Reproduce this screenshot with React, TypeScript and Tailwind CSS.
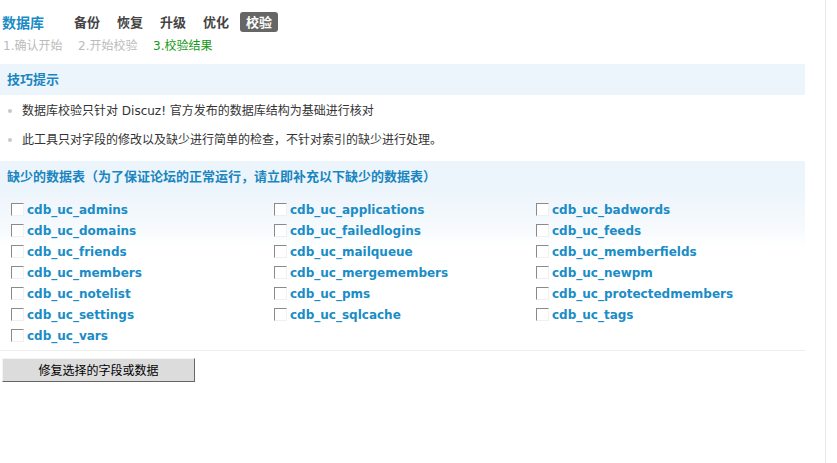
import React from 'react';

const tabs = ['备份', '恢复', '升级', '优化', '校验'];

const tables = [
  'cdb_uc_admins',
  'cdb_uc_applications',
  'cdb_uc_badwords',
  'cdb_uc_domains',
  'cdb_uc_failedlogins',
  'cdb_uc_feeds',
  'cdb_uc_friends',
  'cdb_uc_mailqueue',
  'cdb_uc_memberfields',
  'cdb_uc_members',
  'cdb_uc_mergemembers',
  'cdb_uc_newpm',
  'cdb_uc_notelist',
  'cdb_uc_pms',
  'cdb_uc_protectedmembers',
  'cdb_uc_settings',
  'cdb_uc_sqlcache',
  'cdb_uc_tags',
  'cdb_uc_vars',
];

const cjk = 'font-["DejaVu_Sans","Noto_Sans_CJK_SC",sans-serif]';

function Checkbox() {
  return (
    <span className="block w-[13px] h-[13px] shrink-0 bg-white border-t border-l border-t-[#8a8a8a] border-l-[#8a8a8a] border-b border-r border-b-[#f0f0f0] border-r-[#f0f0f0]" />
  );
}

export default function App() {
  return (
    <div className={`flex min-h-[463px] bg-white ${cjk}`}>
      <div className="w-[825px]">
        <div className="w-[805px]">
          {/* top nav */}
          <div className="flex items-center h-[22px] mt-[11px]">
            <h1 className="ml-[2px] w-[66px] text-[14px] font-bold text-[#1a8cc6] leading-none font-['Noto_Sans_CJK_SC',sans-serif]">
              数据库
            </h1>
            <div className="flex gap-[5px]">
              {tabs.map((t) => (
                <span
                  key={t}
                  className={
                    t === '校验'
                      ? 'px-[6px] h-[20px] flex items-center rounded-[3px] bg-[#666] text-white text-[13px] font-bold font-["Noto_Sans_CJK_SC",sans-serif]'
                      : 'px-[6px] h-[20px] flex items-center text-[#444] text-[13px] font-bold font-["Noto_Sans_CJK_SC",sans-serif]'
                  }
                >
                  {t}
                </span>
              ))}
            </div>
          </div>

          {/* steps */}
          <div className="flex items-center h-[16px] mt-[5px] text-[12px] leading-none">
            <span className="ml-[3px] w-[75px] text-[#bbb]">1.确认开始</span>
            <span className="w-[75px] text-[#bbb]">2.开始校验</span>
            <span className="text-[#139a13]">3.校验结果</span>
          </div>

          {/* tips */}
          <div className="mt-[10px] h-[31px] flex items-center pl-[7px] bg-[#edf5fc] text-[13px] font-bold text-[#1a86c0]">
            技巧提示
          </div>
          <ul className="text-[12px] text-[#333]">
            <li className="flex items-center h-[29px] mt-[1px]">
              <span className="ml-[8px] mr-[10px] w-[4px] h-[4px] rounded-full bg-[#c8c8c8]" />
              数据库校验只针对 Discuz! 官方发布的数据库结构为基础进行核对
            </li>
            <li className="flex items-center h-[29px]">
              <span className="ml-[8px] mr-[10px] w-[4px] h-[4px] rounded-full bg-[#c8c8c8]" />
              此工具只对字段的修改以及缺少进行简单的检查，不针对索引的缺少进行处理。
            </li>
          </ul>

          {/* missing tables */}
          <div className="mt-[7px] h-[32px] flex items-center pl-[7px] bg-[#edf5fc] text-[13px] font-bold text-[#1a86c0]">
            缺少的数据表（为了保证论坛的正常运行，请立即补充以下缺少的数据表）
          </div>
          <div className="pt-[6px] pb-[4px] pl-[11px] grid grid-cols-[263px_262px_262px] bg-[linear-gradient(to_bottom,#eef5fb,#f6fafd_35px,#ffffff_55px)]">
            {tables.map((name) => (
              <label key={name} className="flex items-center gap-[3px] h-[21px]">
                <Checkbox />
                <span className="text-[12px] font-bold text-[#1a8cc6] font-['DejaVu_Sans',sans-serif]">
                  {name}
                </span>
              </label>
            ))}
          </div>
          <div className="h-px bg-[#efefef]" />

          <button
            type="button"
            className="mt-[7px] ml-[2px] w-[193px] h-[24px] bg-[#dcdcdc] text-[12px] text-black border-t border-l border-t-[#f4f4f4] border-l-[#f4f4f4] border-b border-r border-b-[#666] border-r-[#666] font-['Noto_Sans_CJK_SC',sans-serif]"
          >
            修复选择的字段或数据
          </button>
        </div>
      </div>
      <div className="w-px bg-[#e8e8e8]" />
    </div>
  );
}
